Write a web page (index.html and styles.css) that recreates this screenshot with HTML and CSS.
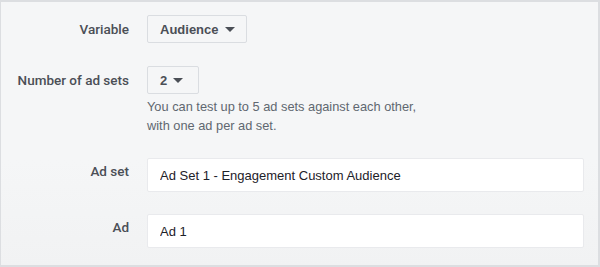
FILE: index.html
```html
<!DOCTYPE html>
<html lang="en">
<head>
  <meta charset="UTF-8">
  <title>Split test settings</title>
  <link rel="stylesheet" href="styles.css">
</head>
<body>
  <div class="panel">
    <div class="row">
      <label class="label">Variable</label>
      <div class="field">
        <button class="dropdown">Audience <span class="caret"></span></button>
      </div>
    </div>

    <div class="row">
      <label class="label">Number of ad sets</label>
      <div class="field">
        <button class="dropdown small">2 <span class="caret"></span></button>
        <p class="help">You can test up to 5 ad sets against each other,<br>with one ad per ad set.</p>
      </div>
    </div>

    <div class="row text-row">
      <label class="label">Ad set</label>
      <div class="field">
        <input type="text" value="Ad Set 1 - Engagement Custom Audience">
      </div>
    </div>

    <div class="row text-row">
      <label class="label">Ad</label>
      <div class="field">
        <input type="text" value="Ad 1">
      </div>
    </div>
  </div>
</body>
</html>
```

FILE: styles.css
```css
html, body {
  margin: 0;
  padding: 0;
}
body {
  font-family: "Liberation Sans", Arial, sans-serif;
  font-size: 13px;
  color: #1d2129;
  background: #fff;
}
.panel {
  box-sizing: border-box;
  width: 600px;
  height: 267px;
  border: 2px solid #dcdee1;
  border-left-width: 1px;
  background: linear-gradient(#f5f6f7 60%, #f1f2f3);
  padding: 13px 15px 0 0;
}
.row {
  display: grid;
  grid-template-columns: 128px 1fr;
  column-gap: 18px;
  align-items: start;
  margin-bottom: 23px;
}
.text-row {
  margin-bottom: 22px;
}
.label {
  text-align: right;
  font-family: Roboto, "Liberation Sans", sans-serif;
  font-weight: 500;
  font-size: 13.5px;
  color: #4b4f56;
  line-height: 28px;
}
.text-row .label {
  line-height: 26px;
}
.dropdown {
  box-sizing: border-box;
  height: 28px;
  padding: 0 12px;
  font-family: inherit;
  font-size: 13px;
  font-weight: bold;
  color: #4b4f56;
  background: #f5f6f7;
  border: 1px solid #dadde1;
  border-radius: 2px;
  display: inline-flex;
  align-items: center;
  gap: 6px;
  width: 100px;
}
.dropdown.small {
  width: 52px;
}
.caret {
  width: 0;
  height: 0;
  border-left: 5px solid transparent;
  border-right: 5px solid transparent;
  border-top: 5px solid #4b4f56;
}
.help {
  margin: 3px 0 0;
  color: #606770;
  font-size: 12.8px;
  line-height: 19px;
}
input {
  box-sizing: border-box;
  width: 437px;
  height: 34px;
  padding: 0 12px;
  font-family: inherit;
  font-size: 13px;
  color: #1d2129;
  background: #fff;
  border: 1px solid #e9eaed;
  border-radius: 2px;
  outline: none;
}
```
